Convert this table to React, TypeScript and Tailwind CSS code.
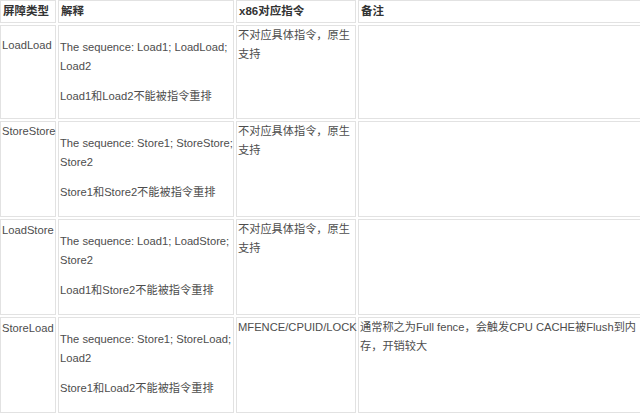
import React from "react";

const cell = "bg-white border border-[#e2e2e2] pl-[1px] whitespace-nowrap";

type Row = {
  name: string;
  nameTop: string;
  seq: [string, string];
  note: string;
  x86: React.ReactNode;
  remark: React.ReactNode;
};

const rows: Row[] = [
  {
    name: "LoadLoad",
    nameTop: "pt-[10px]",
    seq: ["The sequence: Load1; LoadLoad;", "Load2"],
    note: "Load1和Load2不能被指令重排",
    x86: (
      <>
        不对应具体指令，原生
        <br />
        支持
      </>
    ),
    remark: null,
  },
  {
    name: "StoreStore",
    nameTop: "pt-0",
    seq: ["The sequence: Store1; StoreStore;", "Store2"],
    note: "Store1和Store2不能被指令重排",
    x86: (
      <>
        不对应具体指令，原生
        <br />
        支持
      </>
    ),
    remark: null,
  },
  {
    name: "LoadStore",
    nameTop: "pt-[1px]",
    seq: ["The sequence: Load1; LoadStore;", "Store2"],
    note: "Load1和Store2不能被指令重排",
    x86: (
      <>
        不对应具体指令，原生
        <br />
        支持
      </>
    ),
    remark: null,
  },
  {
    name: "StoreLoad",
    nameTop: "pt-[1px]",
    seq: ["The sequence: Store1; StoreLoad;", "Load2"],
    note: "Store1和Load2不能被指令重排",
    x86: <>MFENCE/CPUID/LOCK</>,
    remark: (
      <>
        通常称之为Full fence，会触发CPU CACHE被Flush到内
        <br />
        存，开销较大
      </>
    ),
  },
];

export default function App() {
  return (
    <div
      className="w-[640px] h-[414px] bg-white overflow-hidden text-[#4d4d4d] text-[11.2px] leading-[19px]"
      style={{ fontFamily: '"Liberation Sans", Arial, "Noto Sans CJK SC", sans-serif' }}
    >
      <div className="grid grid-cols-[56px_176px_120px_283px] grid-rows-[23px_94px_96px_96px_96px] gap-[2px]">
        <div className={`${cell} bg-[#efefef] font-bold text-[#333] text-[11.5px] flex items-center pl-[2px]`}>屏障类型</div>
        <div className={`${cell} bg-[#efefef] font-bold text-[#333] text-[11.5px] flex items-center pl-[2px]`}>解释</div>
        <div className={`${cell} bg-[#efefef] font-bold text-[#333] text-[11.5px] flex items-center pl-[2px]`}>x86对应指令</div>
        <div className={`${cell} bg-[#efefef] font-bold text-[#333] text-[11.5px] flex items-center pl-[2px]`}>备注</div>
        {rows.map((r) => (
          <React.Fragment key={r.name}>
            <div className={`${cell} ${r.nameTop}`}>{r.name}</div>
            <div className={`${cell} pt-[12px]`}>
              <p>
                {r.seq[0]}
                <br />
                {r.seq[1]}
              </p>
              <p className="mt-[11px]">{r.note}</p>
            </div>
            <div className={cell}>{r.x86}</div>
            <div className={cell}>{r.remark}</div>
          </React.Fragment>
        ))}
      </div>
    </div>
  );
}
